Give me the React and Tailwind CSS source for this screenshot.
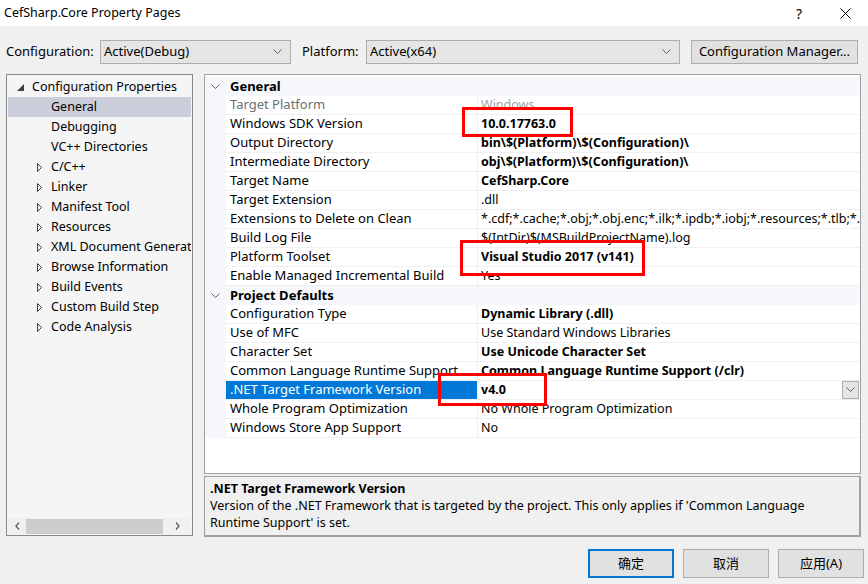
import React from "react";

const font = { fontFamily: '"Noto Sans", "Noto Sans CJK SC", sans-serif' };

const tree = [
  { label: "General", selected: true },
  { label: "Debugging" },
  { label: "VC++ Directories" },
  { label: "C/C++", exp: true },
  { label: "Linker", exp: true },
  { label: "Manifest Tool", exp: true },
  { label: "Resources", exp: true },
  { label: "XML Document Generator", exp: true },
  { label: "Browse Information", exp: true },
  { label: "Build Events", exp: true },
  { label: "Custom Build Step", exp: true },
  { label: "Code Analysis", exp: true },
];

const sections = [
  {
    title: "General",
    rows: [
      { name: "Target Platform", value: "Windows", dim: true },
      { name: "Windows SDK Version", value: "10.0.17763.0", bold: true },
      { name: "Output Directory", value: "bin\\$(Platform)\\$(Configuration)\\", bold: true },
      { name: "Intermediate Directory", value: "obj\\$(Platform)\\$(Configuration)\\", bold: true },
      { name: "Target Name", value: "CefSharp.Core", bold: true },
      { name: "Target Extension", value: ".dll" },
      { name: "Extensions to Delete on Clean", value: "*.cdf;*.cache;*.obj;*.obj.enc;*.ilk;*.ipdb;*.iobj;*.resources;*.tlb;*.tli;*.t" },
      { name: "Build Log File", value: "$(IntDir)$(MSBuildProjectName).log" },
      { name: "Platform Toolset", value: "Visual Studio 2017 (v141)", bold: true },
      { name: "Enable Managed Incremental Build", value: "Yes" },
    ],
  },
  {
    title: "Project Defaults",
    rows: [
      { name: "Configuration Type", value: "Dynamic Library (.dll)", bold: true },
      { name: "Use of MFC", value: "Use Standard Windows Libraries" },
      { name: "Character Set", value: "Use Unicode Character Set", bold: true },
      { name: "Common Language Runtime Support", value: "Common Language Runtime Support (/clr)", bold: true },
      { name: ".NET Target Framework Version", value: "v4.0", bold: true, selected: true },
      { name: "Whole Program Optimization", value: "No Whole Program Optimization" },
      { name: "Windows Store App Support", value: "No" },
    ],
  },
];

function Chevron({ className = "" }) {
  return (
    <svg width="9" height="6" viewBox="0 0 9 6" className={className}>
      <path d="M0.5 0.5 L4.5 4.5 L8.5 0.5" fill="none" stroke="#606060" strokeWidth="1" />
    </svg>
  );
}

function Combo({ value, w }) {
  return (
    <div className={`shrink-0 h-[24px] ${w} border border-[#adadad] bg-[#e5e5e5] flex items-center pl-[3px] pr-[8px]`}>
      <span className="flex-1 text-[13px] text-black">{value}</span>
      <Chevron />
    </div>
  );
}

function RedBox({ className }) {
  return <div className={`absolute border-[3px] border-[#ff0000] pointer-events-none ${className}`} />;
}

export default function App() {
  return (
    <div style={font} className="w-[868px] h-[584px] bg-[#f0f0f0] text-[12px] text-black overflow-hidden relative">
      {/* title bar */}
      <div className="h-[26px] bg-white flex items-center pl-[4px]">
        <span className="flex-1 text-[12.5px]">CefSharp.Core Property Pages</span>
        <span className="w-[46px] text-center text-[14px]">?</span>
        <span className="w-[46px] flex justify-center">
          <svg width="11" height="11" viewBox="0 0 11 11">
            <path d="M0.5 0.5 L10.5 10.5 M10.5 0.5 L0.5 10.5" stroke="#000" strokeWidth="1" />
          </svg>
        </span>
      </div>

      {/* configuration row */}
      <div className="flex items-center h-[24px] mt-[14px] pl-[6px]">
        <span className="shrink-0 w-[94px] text-[13px]">Configuration:</span>
        <Combo value="Active(Debug)" w="w-[191px]" />
        <span className="shrink-0 w-[75px] pl-[11px] text-[13px]">Platform:</span>
        <Combo value="Active(x64)" w="w-[314px]" />
        <div className="shrink-0 ml-[11px] w-[167px] h-[24px] border border-[#adadad] bg-[#e1e1e1] flex items-center justify-center text-[13px]">
          Configuration Manager...
        </div>
      </div>

      {/* main area */}
      <div className="flex mt-[10px] pl-[6px]">
        {/* tree */}
        <div className="w-[187px] h-[462px] border border-[#828790] bg-[#f5f5f5] flex flex-col p-[1px]">
          <div className="flex-1 pt-[1px] overflow-hidden">
            <div className="h-[20px] flex items-center whitespace-nowrap">
              <svg width="7" height="7" viewBox="0 0 7 7" className="shrink-0 ml-[9px] mr-[8px]">
                <path d="M7 0 L7 7 L0 7 Z" fill="#404040" />
              </svg>
              <span className="text-[12.5px]">Configuration Properties</span>
            </div>
            {tree.map((t) => (
              <div key={t.label} className={`h-[20px] flex items-center whitespace-nowrap overflow-hidden ${t.selected ? "bg-[#cccedb]" : ""}`}>
                <span className="shrink-0 w-[43px] flex justify-end pr-[9px]">
                  {t.exp && (
                    <svg width="5" height="9" viewBox="0 0 5 9">
                      <path d="M0.5 0.5 L4.5 4.5 L0.5 8.5 Z" fill="none" stroke="#404040" strokeWidth="1" />
                    </svg>
                  )}
                </span>
                <span className="text-[12.5px]">{t.label}</span>
              </div>
            ))}
          </div>
          <div className="h-[16px] flex items-center bg-[#f0f0f0]">
            <span className="w-[18px] flex justify-center">
              <svg width="5" height="8" viewBox="0 0 5 8"><path d="M4 0.5 L1 4 L4 7.5" fill="none" stroke="#606060" strokeWidth="1.3" /></svg>
            </span>
            <div className="w-[137px] h-[15px] bg-[#cdcdcd]" />
            <span className="flex-1 flex justify-center">
              <svg width="5" height="8" viewBox="0 0 5 8"><path d="M1 0.5 L4 4 L1 7.5" fill="none" stroke="#606060" strokeWidth="1.3" /></svg>
            </span>
          </div>
        </div>

        {/* right column */}
        <div className="ml-[11px] flex flex-col">
          <div className="w-[657px] h-[400px] border border-[#a0a0a0] bg-white pt-[2px] overflow-hidden">
            {sections.map((s) => (
              <div key={s.title}>
                <div className="h-[19px] flex items-center bg-[#f5f7fb]">
                  <span className="w-[21px] flex justify-center">
                    <Chevron />
                  </span>
                  <span className="pl-[4px] font-bold text-[13px]">{s.title}</span>
                </div>
                {s.rows.map((r) => (
                  <div key={r.name} className="h-[19px] flex">
                    <div className="w-[21px] bg-[#f5f7fb]" />
                    <div className={`w-[252px] border-b border-r border-[#f0f0f0] pl-[4px] flex items-center whitespace-nowrap overflow-hidden text-[13px] ${r.selected ? "bg-[#0078d7] text-white" : r.dim ? "text-[#6d6d6d]" : ""}`}>
                      {r.name}
                    </div>
                    <div className={`flex-1 min-w-0 border-b border-[#f0f0f0] pl-[3px] flex items-center whitespace-nowrap overflow-hidden text-[12.5px] ${r.bold ? "font-bold" : ""} ${r.dim ? "text-[#a0a0a0]" : ""}`}>
                      <span className="flex-1 overflow-hidden">{r.value}</span>
                      {r.selected && (
                        <span className="w-[17px] h-[18px] border border-[#adadad] bg-[#e5e5e5] flex items-center justify-center mr-[1px]">
                          <Chevron />
                        </span>
                      )}
                    </div>
                  </div>
                ))}
              </div>
            ))}
          </div>
          <div className="mt-[2px] w-[657px] h-[61px] border border-[#a0a0a0] border-b-2 border-r-2 px-[5px] pt-[3px] text-[12.5px] leading-[17px]">
            <div className="font-bold">.NET Target Framework Version</div>
            <div className="pr-[40px]">
              Version of the .NET Framework that is targeted by the project. This only applies if 'Common Language Runtime Support' is set.
            </div>
          </div>
        </div>
      </div>

      {/* buttons */}
      <div className="flex justify-end mt-[12px] pr-[4px] gap-[9px]">
        <div className="w-[86px] h-[29px] border-2 border-[#0078d7] bg-[#e1e1e1] flex items-center justify-center text-[13px]">确定</div>
        <div className="w-[86px] h-[29px] border border-[#adadad] bg-[#e1e1e1] flex items-center justify-center text-[13px]">取消</div>
        <div className="w-[86px] h-[29px] border border-[#adadad] bg-[#e1e1e1] flex items-center justify-center text-[13px]">应用(A)</div>
      </div>

      {/* annotation boxes */}
      <RedBox className="left-[462px] top-[107px] w-[111px] h-[30px]" />
      <RedBox className="left-[460px] top-[240px] w-[185px] h-[36px]" />
      <RedBox className="left-[438px] top-[373px] w-[109px] h-[33px]" />
    </div>
  );
}
